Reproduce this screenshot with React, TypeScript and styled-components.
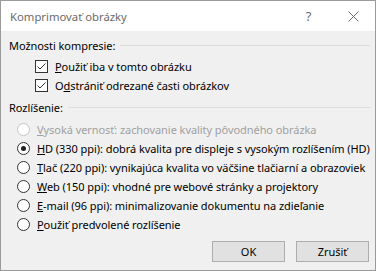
import React from "react";
import styled, { createGlobalStyle } from "styled-components";

const Global = createGlobalStyle`
  html, body { margin: 0; padding: 0; background: #ffffff; }
  body { font-family: "Noto Sans", "Liberation Sans", Arial, sans-serif; }
`;

const Dialog = styled.div`
  width: 376px;
  height: 271px;
  box-sizing: border-box;
  border: 1px solid #9a9a9a;
  display: flex;
  flex-direction: column;
  background: #f0f0f0;
  font-family: "Noto Sans", "Liberation Sans", Arial, sans-serif;
  font-size: 11px;
  letter-spacing: -0.06px;
  color: #000;
`;

const TitleBar = styled.div`
  height: 30px;
  background: #ffffff;
  display: flex;
  align-items: center;
  padding-left: 9px;
  flex: none;
`;

const Title = styled.div`
  flex: 1;
  color: #6b6b6b;
  font-size: 11.3px;
  letter-spacing: 0;
  padding-top: 1px;
`;

const TitleButton = styled.div<{ $w: number }>`
  width: ${(p) => p.$w}px;
  height: 30px;
  display: flex;
  align-items: center;
  justify-content: center;
  color: #6b6b6b;
  font-size: 13px;
`;

const Content = styled.div`
  flex: 1;
  display: flex;
  flex-direction: column;
  padding: 7px 5px 0 8px;
`;

const GroupHeader = styled.div<{ $mt: number }>`
  display: flex;
  align-items: center;
  height: 15px;
  margin-top: ${(p) => p.$mt}px;
  gap: 5px;
  white-space: nowrap;
  &::after {
    content: "";
    flex: 1;
    height: 1px;
    background: #dcdcdc;
  }
`;

const List = styled.div<{ $indent: number; $mt: number }>`
  display: flex;
  flex-direction: column;
  padding-left: ${(p) => p.$indent}px;
  margin-top: ${(p) => p.$mt}px;
`;

const Row = styled.div<{ $disabled?: boolean }>`
  height: 19px;
  display: flex;
  align-items: center;
  color: ${(p) => (p.$disabled ? "#a0a0a0" : "#000")};
  white-space: nowrap;
`;

const Box = styled.span`
  width: 13px;
  height: 13px;
  box-sizing: border-box;
  border: 1px solid #333;
  background: #fff;
  margin-right: 7px;
  display: flex;
  align-items: center;
  justify-content: center;
  flex: none;
`;

const Radio = styled.span<{ $checked?: boolean; $disabled?: boolean }>`
  width: 13px;
  height: 13px;
  box-sizing: border-box;
  border-radius: 50%;
  border: 1px solid ${(p) => (p.$disabled ? "#c4c4c4" : "#333")};
  background: #fff;
  margin-right: 7px;
  display: flex;
  align-items: center;
  justify-content: center;
  flex: none;
  &::after {
    content: "";
    display: ${(p) => (p.$checked ? "block" : "none")};
    width: 5px;
    height: 5px;
    border-radius: 50%;
    background: #222;
  }
`;

const Footer = styled.div`
  display: flex;
  justify-content: flex-end;
  gap: 11px;
  margin-top: 7px;
  padding-right: 1px;
`;

const Button = styled.div`
  width: 73px;
  height: 21px;
  box-sizing: border-box;
  border: 1px solid #adadad;
  background: #e1e1e1;
  display: flex;
  align-items: center;
  justify-content: center;
`;

const Check = () => (
  <svg width="11" height="11" viewBox="0 0 11 11">
    <path d="M1.5 5.5 L4 8 L9.5 2.5" fill="none" stroke="#333" strokeWidth="1" />
  </svg>
);

export default function App() {
  return (
    <>
      <Global />
      <Dialog>
        <TitleBar>
          <Title>Komprimovať obrázky</Title>
          <TitleButton $w={45}>?</TitleButton>
          <TitleButton $w={44}>
            <svg width="11" height="11" viewBox="0 0 11 11">
              <path d="M0.5 0.5 L10.5 10.5 M10.5 0.5 L0.5 10.5" stroke="#6b6b6b" strokeWidth="1" />
            </svg>
          </TitleButton>
        </TitleBar>
        <Content>
          <GroupHeader $mt={0}>Možnosti kompresie:</GroupHeader>
          <List $indent={26} $mt={4}>
            <Row>
              <Box><Check /></Box>
              <span><u>P</u>oužiť iba v tomto obrázku</span>
            </Row>
            <Row>
              <Box><Check /></Box>
              <span>O<u>d</u>strániť odrezané časti obrázkov</span>
            </Row>
          </List>
          <GroupHeader $mt={5}>Rozlíšenie:</GroupHeader>
          <List $indent={8} $mt={5}>
            <Row $disabled>
              <Radio $disabled />
              <span><u>V</u>ysoká vernosť: zachovanie kvality pôvodného obrázka</span>
            </Row>
            <Row>
              <Radio $checked />
              <span><u>H</u>D (330 ppi): dobrá kvalita pre displeje s vysokým rozlíšením (HD)</span>
            </Row>
            <Row>
              <Radio />
              <span><u>T</u>lač (220 ppi): vynikajúca kvalita vo väčšine tlačiarní a obrazoviek</span>
            </Row>
            <Row>
              <Radio />
              <span><u>W</u>eb (150 ppi): vhodné pre webové stránky a projektory</span>
            </Row>
            <Row>
              <Radio />
              <span><u>E</u>-mail (96 ppi): minimalizovanie dokumentu na zdieľanie</span>
            </Row>
            <Row>
              <Radio />
              <span><u>P</u>oužiť predvolené rozlíšenie</span>
            </Row>
          </List>
          <Footer>
            <Button>OK</Button>
            <Button>Zrušiť</Button>
          </Footer>
        </Content>
      </Dialog>
    </>
  );
}
